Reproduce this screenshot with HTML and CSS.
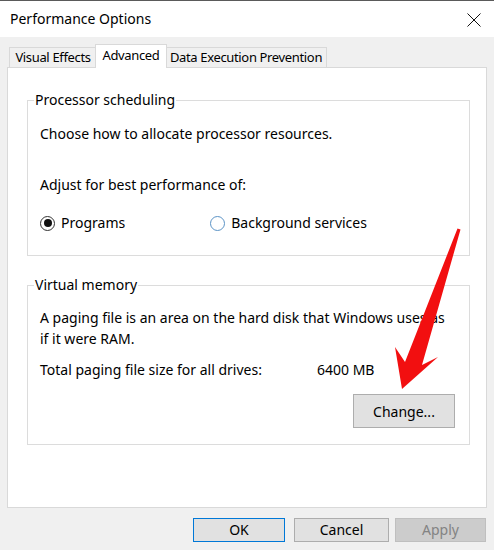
FILE: index.html
```html
<!DOCTYPE html>
<html>
<head>
<meta charset="utf-8">
<link rel="stylesheet" href="styles.css">
</head>
<body>
<div class="window">
  <div class="titlebar">
    <span class="title">Performance Options</span>
    <svg class="close" width="14" height="14" viewBox="0 0 14 14"><path d="M0.5 0.5 L13.5 13.5 M13.5 0.5 L0.5 13.5" stroke="#111" stroke-width="1" fill="none"/></svg>
  </div>
  <div class="body">
    <div class="tabs">
      <div class="tab t1">Visual Effects</div>
      <div class="tab active">Advanced</div>
      <div class="tab t3">Data Execution Prevention</div>
    </div>
    <div class="panel">
      <fieldset class="group g1">
        <legend>Processor scheduling</legend>
        <div class="line first">Choose how to allocate processor resources.</div>
        <div class="line adjust">Adjust for best performance of:</div>
        <div class="radios">
          <label class="radio"><span class="dot checked"></span>Programs</label>
          <label class="radio second"><span class="dot"></span>Background services</label>
        </div>
      </fieldset>
      <fieldset class="group g2">
        <legend>Virtual memory</legend>
        <div class="para">A paging file is an area on the hard disk that Windows uses as<br>if it were RAM.</div>
        <div class="total"><span class="tlabel">Total paging file size for all drives:</span><span>6400 MB</span></div>
        <div class="change-row"><button class="btn change">Change...</button></div>
      </fieldset>
    </div>
    <div class="footer">
      <button class="btn ok">OK</button>
      <button class="btn cancel">Cancel</button>
      <button class="btn disabled">Apply</button>
    </div>
  </div>
  <svg class="arrow" width="494" height="550" viewBox="0 0 494 550">
    <path d="M457.5 228.5 L460.5 229.5 L422 365 L438 357 L402 389 L395 347 L405 362 Z" fill="#f20f10"/>
  </svg>
</div>
</body>
</html>
```
FILE: styles.css
```css
* { box-sizing: border-box; }
html, body { margin: 0; padding: 0; }
body {
  width: 494px;
  height: 550px;
  overflow: hidden;
  font-family: "Noto Sans", "Open Sans", sans-serif;
  font-size: 14px;
  color: #000;
  background: #f0f0f0;
  white-space: nowrap;
}
.window {
  position: relative;
  width: 494px;
  height: 550px;
  border-top: 1px solid #5a5a5a;
}
.titlebar {
  height: 36px;
  background: #fff;
  display: flex;
  align-items: center;
  justify-content: space-between;
  padding: 0 13px 0 10px;
}
.title { font-size: 14px; line-height: 20px; margin-top: 0; }
.close { display: block; margin-top: 2px; }
.body {
  padding: 7px 7px 0 7px;
}
.tabs {
  display: flex;
  align-items: flex-end;
  padding-left: 2px;
  height: 23px;
}
.tab {
  height: 20px;
  line-height: 19px;
  text-align: center;
  border: 1px solid #d9d9d9;
  border-bottom: none;
  background: #f0f0f0;
  font-size: 13px;
  letter-spacing: -0.35px;
}
.tab.t1 { width: 88px; margin-right: -1px; }
.tab.t3 { width: 162px; margin-left: -1px; }
.tab.active {
  width: 72px;
  height: 24px;
  margin-bottom: -1px;
  margin-left: -1px;
  margin-right: -1px;
  background: #fff;
  position: relative;
  z-index: 1;
  line-height: 20px;
}
.panel {
  background: #fff;
  border: 1px solid #d9d9d9;
  height: 441px;
  padding: 22px 16px 0 19px;
}
.group {
  border: 1px solid #dcdcdc;
  margin: 0;
  padding: 0 14px 0 12px;
  min-width: 0;
}
.group legend {
  padding: 0 1px;
  margin-left: -6px;
  line-height: 20px;
  font-size: 14px;
}
.line { line-height: 20px; }
.line.first { margin-top: 14px; }
.line.adjust { margin-top: 31px; }
.radios {
  display: flex;
  margin-top: 18px;
  padding-bottom: 22px;
  line-height: 20px;
}
.radio { display: flex; align-items: center; }
.radio.second { margin-left: 85px; }
.dot {
  width: 15px;
  height: 15px;
  border-radius: 50%;
  border: 1px solid #5b93c6;
  margin-right: 6px;
  display: flex;
  align-items: center;
  justify-content: center;
}
.dot.checked { border-color: #333; }
.dot.checked::after {
  content: "";
  width: 8px;
  height: 8px;
  border-radius: 50%;
  background: #111;
}
.g2 { margin-top: 19px; }
.para { margin-top: 12px; line-height: 21px; }
.total { display: flex; margin-top: 11px; line-height: 20px; }
.tlabel { width: 277px; }
.change-row { display: flex; justify-content: flex-end; margin-top: 14px; padding-bottom: 16px; }
.btn {
  font-family: inherit;
  font-size: 14px;
  color: #000;
  background: #e1e1e1;
  border: 1px solid #adadad;
  margin: 0;
  padding: 0;
}
.change { width: 102px; height: 34px; }
.footer {
  display: flex;
  justify-content: flex-end;
  padding-top: 10px;
  padding-right: 1px;
}
.footer .btn { height: 24px; line-height: 20px; }
.btn.ok { width: 92px; border: 1px solid #0078d7; }
.btn.cancel { width: 95px; margin-left: 9px; }
.btn.disabled { width: 91px; margin-left: 6px; background: #cccccc; border-color: #bfbfbf; color: #838383; }
.arrow { position: absolute; left: 0; top: -1px; pointer-events: none; }
```
